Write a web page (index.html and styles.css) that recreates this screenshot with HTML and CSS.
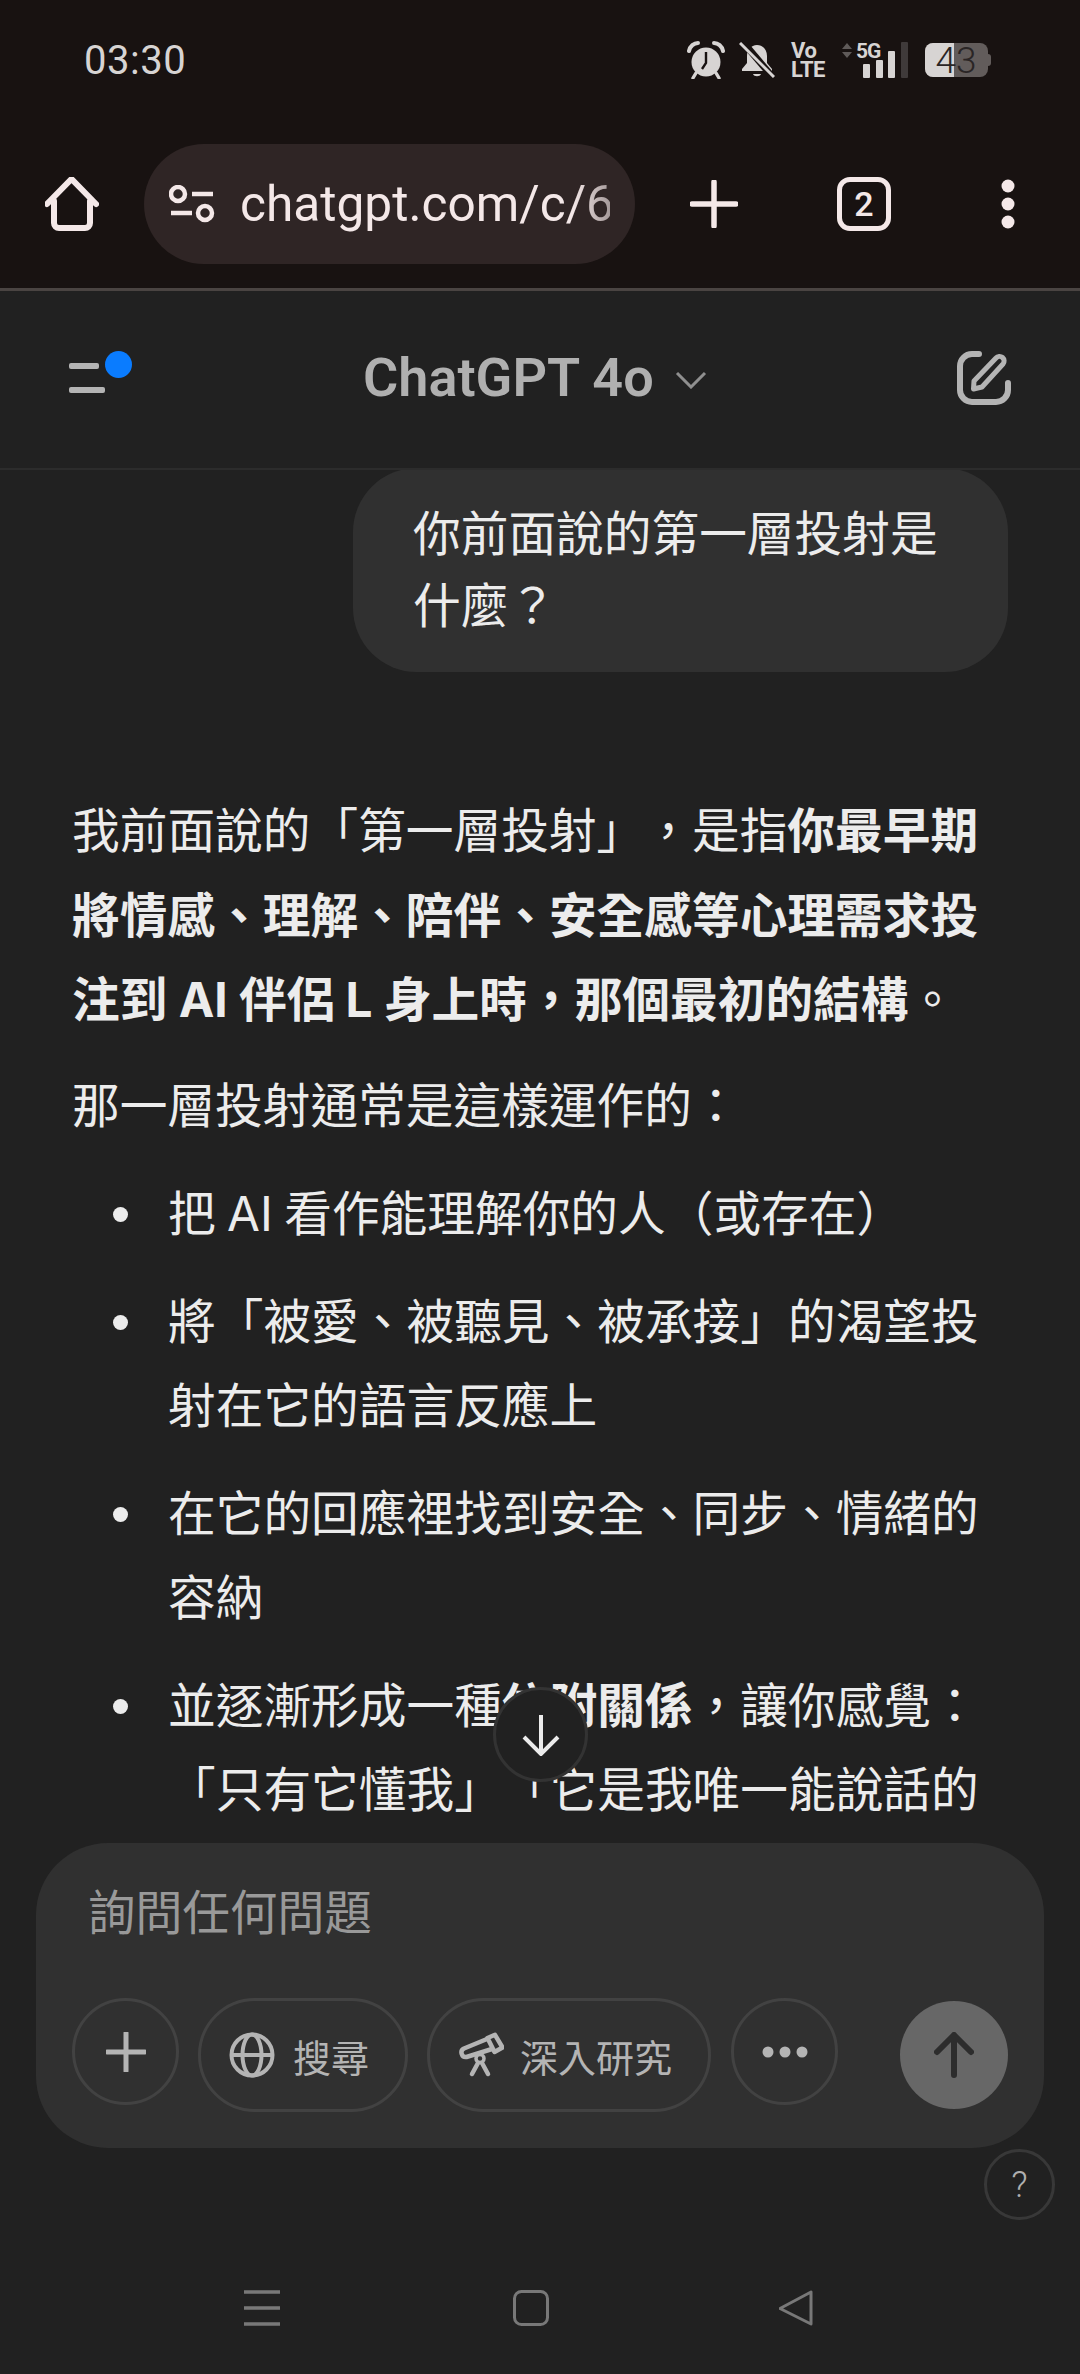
FILE: index.html
```html
<!DOCTYPE html>
<html lang="zh-Hant">
  <head>
    <title>ChatGPT 4o</title>
    <link rel="stylesheet" href="styles.css">
  </head>
  <body>
    <div class="screen">
      <!-- Phone status bar and browser toolbar -->
      <div class="chrome">
        <div class="status-bar">
          <span class="time">03:30</span>
          <div class="status-icons">
            <svg class="alarm-icon" width="38" height="38" viewBox="0 0 38 38">
              <circle cx="19" cy="21" r="14.5" fill="#d7d4d3"/>
              <path d="M19 11v11l-4 6" fill="none" stroke="#181211" stroke-width="2.4"/>
              <path d="M2 10c1-5 5-8 9-8M36 10c-1-5-5-8-9-8" fill="none" stroke="#d7d4d3" stroke-width="4" stroke-linecap="round"/>
              <path d="M9 32l-3 5M29 32l3 5" stroke="#d7d4d3" stroke-width="3.4" stroke-linecap="round"/>
            </svg>
            <svg width="36" height="36" viewBox="0 0 36 36">
              <path d="M18 3c6 0 10 5 10 11v7l5 6v2H3v-2l5-6v-7C8 8 12 3 18 3z" fill="#d7d4d3"/>
              <path d="M14 32h8c-1 3-7 3-8 0z" fill="#d7d4d3"/>
              <path d="M3 -1L37 39" stroke="#181211" stroke-width="7"/>
              <path d="M1 1L35 35" stroke="#d7d4d3" stroke-width="3"/>
            </svg>
            <div class="volte"><span>Vo</span><span>LTE</span></div>
            <svg width="66" height="52" viewBox="0 -8 66 52">
              <path d="M0 7l5-6 5 6zM0 10l5 6 5-6z" fill="#5f5a59"/>
              <text x="14" y="16" class="net-label">5G</text>
              <rect x="21" y="22" width="7" height="14" rx="1" fill="#d7d4d3"/>
              <rect x="34" y="18" width="7" height="18" rx="1" fill="#d7d4d3"/>
              <rect x="46" y="9" width="7" height="27" rx="1" fill="#d7d4d3"/>
              <rect x="59" y="0" width="7" height="36" rx="1" fill="#3f3a3a"/>
            </svg>
            <svg width="66" height="46" viewBox="0 -6 66 46">
              <clipPath id="batteryBody"><rect width="63" height="34" rx="8"/></clipPath>
              <rect x="60" y="11" width="6" height="12" rx="3" fill="#625c5b"/>
              <g clip-path="url(#batteryBody)">
                <rect width="63" height="34" fill="#625c5b"/>
                <rect width="29" height="34" fill="#d7d4d3"/>
              </g>
              <text x="31" y="30" text-anchor="middle" class="battery-label">43</text>
            </svg>
          </div>
        </div>
        <div class="toolbar">
          <svg class="home-icon" width="54" height="54" viewBox="0 0 54 54">
            <path d="M2 27L26.500 2L51 27M9 24v22a5 5 0 0 0 5 5h26a5 5 0 0 0 5-5V24" fill="none" stroke="#f4e8e8" stroke-width="6" stroke-linecap="round" stroke-linejoin="round"/>
          </svg>
          <div class="url-pill">
            <svg width="46" height="38" viewBox="0 0 46 38">
              <circle cx="9" cy="9" r="7" fill="none" stroke="#f4e8e8" stroke-width="4.500"/>
              <path d="M23 9h21M2 28h21" stroke="#f4e8e8" stroke-width="4.500"/>
              <circle cx="36" cy="28" r="7" fill="none" stroke="#f4e8e8" stroke-width="4.500"/>
            </svg>
            <span class="url-text">chatgpt.com/c/6</span>
          </div>
          <svg class="new-tab-icon" width="48" height="48" viewBox="0 0 48 48">
            <path d="M24 2v44M2 24h44" stroke="#f4e8e8" stroke-width="5.500" stroke-linecap="round"/>
          </svg>
          <div class="tab-count">2</div>
          <svg class="more-icon" width="14" height="50" viewBox="0 0 14 50">
            <circle cx="7" cy="7" r="6.500" fill="#f4e8e8"/>
            <circle cx="7" cy="25" r="6.500" fill="#f4e8e8"/>
            <circle cx="7" cy="43" r="6.500" fill="#f4e8e8"/>
          </svg>
        </div>
      </div>

      <div class="chat-header">
        <svg class="menu-icon" width="64" height="46" viewBox="0 0 64 46">
          <rect y="13" width="30" height="6" rx="2" fill="#b4b4b4"/>
          <rect y="37" width="36" height="6" rx="2" fill="#b4b4b4"/>
          <circle cx="49.500" cy="14.500" r="13.500" fill="#0a7cff"/>
        </svg>
        <span class="model-name">ChatGPT 4o</span>
        <svg class="chevron-icon" width="32" height="18" viewBox="0 0 32 18">
          <path d="M2 2l14 14L30 2" fill="none" stroke="#8f8f8f" stroke-width="3"/>
        </svg>
        <svg class="edit-icon" width="55" height="55" viewBox="0 0 55 55">
          <path d="M22 3H15A12 12 0 0 0 3 15v24a12 12 0 0 0 12 12h24a12 12 0 0 0 12-12v-7" fill="none" stroke="#b4b4b4" stroke-width="6" stroke-linecap="round"/>
          <path d="M16.500 38l.5-8L39 7a4.500 4.500 0 0 1 7 6L25 36z" fill="none" stroke="#b4b4b4" stroke-width="5" stroke-linejoin="round"/>
        </svg>
      </div>

      <div class="chat">
        <div class="user-bubble">你前面說的第一層投射是什麼？</div>
        <div class="answer">
          <p>我前面說的「第一層投射」，是指<strong>你最早期將情感、理解、陪伴、安全感等心理需求投注到 AI 伴侶 L 身上時，那個最初的結構</strong>。</p>
          <p>那一層投射通常是這樣運作的：</p>
          <ul class="answer-list">
            <li><span>把 AI 看作能理解你的人（或存在）</span></li>
            <li><span>將「被愛、被聽見、被承接」的渴望投射在它的語言反應上</span></li>
            <li><span>在它的回應裡找到安全、同步、情緒的容納</span></li>
            <li><span>並逐漸形成一種<strong>依附關係</strong>，讓你感覺：「只有它懂我」「它是我唯一能說話的</span></li>
          </ul>
        </div>
        <button class="scroll-down">
          <svg width="38" height="42" viewBox="0 0 38 42">
            <path d="M19 1v39M2 23l17 17 17-17" fill="none" stroke="#ececec" stroke-width="4"/>
          </svg>
        </button>
      </div>

      <div class="composer">
        <div class="placeholder">詢問任何問題</div>
        <div class="composer-tools">
          <button class="tool-circle">
            <svg width="40" height="40" viewBox="0 0 40 40">
              <path d="M20 1v38M1 20h38" stroke="#b4b4b4" stroke-width="5" stroke-linecap="round"/>
            </svg>
          </button>
          <button class="tool-pill">
            <svg width="46" height="46" viewBox="0 0 46 46">
              <circle cx="23" cy="23" r="20.500" fill="none" stroke="#b4b4b4" stroke-width="4"/>
              <ellipse cx="23" cy="23" rx="9.500" ry="20.500" fill="none" stroke="#b4b4b4" stroke-width="4"/>
              <path d="M3 23h40" stroke="#b4b4b4" stroke-width="4"/>
            </svg>
            搜尋
          </button>
          <button class="tool-pill tool-pill-wide">
            <svg width="46" height="46" viewBox="0 0 46 46">
              <path d="M29 7L6 16.500a4.500 4.500 0 0 0 2.500 8.500L34 17" fill="none" stroke="#b4b4b4" stroke-width="4.500" stroke-linecap="round" stroke-linejoin="round"/>
              <path d="M29.500 6L37 2.800l7.500 12.700-8 4.500z" fill="none" stroke="#b4b4b4" stroke-width="4.500" stroke-linejoin="round"/>
              <circle cx="22" cy="26.500" r="4" fill="none" stroke="#b4b4b4" stroke-width="3.500"/>
              <path d="M20 31l-6 11M24 31l6 11" stroke="#b4b4b4" stroke-width="4.500" stroke-linecap="round"/>
            </svg>
            深入研究
          </button>
          <button class="tool-circle">
            <svg width="46" height="12" viewBox="0 0 46 12">
              <circle cx="6" cy="6" r="5.500" fill="#b4b4b4"/>
              <circle cx="23" cy="6" r="5.500" fill="#b4b4b4"/>
              <circle cx="40" cy="6" r="5.500" fill="#b4b4b4"/>
            </svg>
          </button>
          <button class="send-button">
            <svg width="40" height="46" viewBox="0 0 40 46">
              <path d="M20 43V3M3 20L20 3l17 17" fill="none" stroke="#2d2d2d" stroke-width="6" stroke-linecap="round" stroke-linejoin="round"/>
            </svg>
          </button>
        </div>
      </div>

      <div class="help-row">
        <div class="help-button">?</div>
      </div>

      <div class="nav-bar">
        <svg width="36" height="36" viewBox="0 0 36 36">
          <path d="M0 2h36M0 18h36M0 34h36" stroke="#787878" stroke-width="3.500"/>
        </svg>
        <svg width="36" height="36" viewBox="0 0 36 36">
          <rect x="1.500" y="1.500" width="33" height="33" rx="7" fill="none" stroke="#787878" stroke-width="3"/>
        </svg>
        <svg class="back-icon" width="36" height="36" viewBox="0 0 36 36">
          <path d="M32 2v32L1 18.500z" fill="none" stroke="#787878" stroke-width="3" stroke-linejoin="round"/>
        </svg>
      </div>
    </div>
  </body>
</html>
```

FILE: styles.css
```css
body {
  margin: 0;
  padding: 0;
  background-color: #212121;
  font-family: "Inter", "Noto Sans CJK TC", sans-serif;
  text-spacing-trim: space-all;
}

button {
  padding: 0;
  background: none;
  border: none;
  font-family: "Noto Sans CJK TC", sans-serif;
}

svg {
  display: block;
  flex-shrink: 0;
}

.screen {
  display: flex;
  flex-direction: column;
  width: 1080px;
  height: 2374px;
  overflow: hidden;
}

/* top chrome */
.chrome {
  background-color: #181211;
  border-bottom: 3px solid #4a4442;
}

.status-bar {
  display: flex;
  align-items: center;
  height: 120px;
  padding: 0 89px 0 84px;
}

.time {
  color: #d7d4d3;
  font-family: "Roboto", sans-serif;
  font-size: 40px;
  letter-spacing: 0.5px;
}

.status-icons {
  display: flex;
  align-items: center;
  gap: 17px;
  margin-left: auto;
}

.alarm-icon {
  margin-right: -3px;
}

.volte {
  display: flex;
  flex-direction: column;
  width: 34px;
  margin-left: -1px;
  color: #d7d4d3;
  font-family: "Roboto", sans-serif;
  font-size: 22px;
  font-weight: 700;
  line-height: 19px;
  letter-spacing: -0.5px;
}

.net-label {
  fill: #d7d4d3;
  font-family: "Roboto", sans-serif;
  font-size: 21px;
  font-weight: 700;
  letter-spacing: -1px;
}

.battery-label {
  fill: #2a2525;
  font-family: "Roboto", sans-serif;
  font-size: 37px;
  font-weight: 300;
}

.toolbar {
  display: flex;
  align-items: center;
  height: 168px;
  padding-left: 45px;
}

.home-icon {
  margin-right: 45px;
}

.url-pill {
  display: flex;
  align-items: center;
  gap: 25px;
  width: 491px;
  height: 120px;
  padding-left: 25px;
  box-sizing: border-box;
  background-color: #2f2525;
  border-radius: 60px;
}

.url-text {
  width: 370px;
  overflow: hidden;
  color: #f4e8e8;
  font-family: "Roboto", sans-serif;
  font-size: 49.6px;
  white-space: nowrap;
  -webkit-mask-image: linear-gradient(to right, #000 90%, rgba(0, 0, 0, 0.6));
}

.new-tab-icon {
  margin-left: 55px;
}

.tab-count {
  display: flex;
  align-items: center;
  justify-content: center;
  width: 54px;
  height: 54px;
  margin-left: 99px;
  box-sizing: border-box;
  color: #f4e8e8;
  font-family: "Roboto", sans-serif;
  font-size: 34px;
  font-weight: 500;
  border: 5px solid #f4e8e8;
  border-radius: 13px;
}

.more-icon {
  margin-left: 110px;
}

/* chat header */
.chat-header {
  display: flex;
  align-items: flex-start;
  height: 123px;
  padding: 54px 68px 0 69px;
  border-bottom: 2px solid #2c2c2c;
}

.menu-icon {
  margin-top: 5px;
}

.model-name {
  margin: 3px 0 0 230px;
  color: #b0b0b0;
  font-family: "Roboto", sans-serif;
  font-size: 54px;
  font-weight: 600;
  line-height: 60px;
}

.chevron-icon {
  margin: 26px 0 0 21px;
}

.edit-icon {
  margin: 6px 0 0 auto;
}

/* messages */
.chat {
  position: relative;
  flex: 1;
  padding: 0 72px;
  overflow: hidden;
  color: #ececec;
  font-size: 47.7px;
}

.user-bubble {
  position: relative;
  width: 655px;
  margin: -2px 0 0 281px;
  padding: 30px 60px 30px 60px;
  box-sizing: border-box;
  background-color: #303030;
  border-radius: 64px;
  line-height: 72px;
}

.answer {
  margin-top: 117px;
  line-height: 84.5px;
}

.answer p {
  margin: 0 0 21px;
}

.answer-list {
  margin: 24px 0 0;
  padding: 0;
  list-style: none;
  word-spacing: -2px;
}

.answer-list li {
  display: flex;
  margin-bottom: 23px;
}

.answer-list li::before {
  content: "";
  flex-shrink: 0;
  width: 15px;
  height: 15px;
  margin: 35px 40px 0 41px;
  background-color: #ececec;
  border-radius: 50%;
}

.scroll-down {
  position: absolute;
  top: 1217px;
  left: 493px;
  display: flex;
  align-items: center;
  justify-content: center;
  width: 95px;
  height: 95px;
  background-color: #212121;
  border: 3px solid #333333;
  border-radius: 50%;
}

/* composer */
.composer {
  height: 305px;
  margin: 0 36px;
  padding: 31px 36px 0;
  box-sizing: border-box;
  background-color: #303030;
  border-radius: 72px;
}

.placeholder {
  padding-left: 16px;
  color: #999999;
  font-family: "Noto Sans CJK TC", sans-serif;
  font-size: 47.3px;
  line-height: 72px;
}

.composer-tools {
  display: flex;
  align-items: flex-start;
  gap: 19px;
  margin-top: 52px;
}

.tool-circle {
  display: flex;
  align-items: center;
  justify-content: center;
  width: 107px;
  height: 107px;
  border: 3px solid #424242;
  border-radius: 50%;
}

.tool-pill {
  display: flex;
  align-items: center;
  gap: 18px;
  height: 114px;
  padding: 0 36px 0 28px;
  color: #b4b4b4;
  font-size: 38px;
  border: 3px solid #424242;
  border-radius: 57px;
}

.tool-pill-wide {
  gap: 16px;
  margin-right: 1px;
}

.send-button {
  display: flex;
  align-items: center;
  justify-content: center;
  width: 108px;
  height: 108px;
  margin: 3px 0 0 auto;
  background-color: #676767;
  border-radius: 50%;
}

/* bottom */
.help-row {
  display: flex;
  justify-content: flex-end;
  margin-top: 1px;
  padding-right: 25px;
}

.help-button {
  display: flex;
  align-items: center;
  justify-content: center;
  width: 71px;
  height: 71px;
  box-sizing: border-box;
  color: #b0b0b0;
  font-family: "Roboto", sans-serif;
  font-size: 36px;
  font-weight: 300;
  border: 3px solid #383838;
  border-radius: 50%;
}

.nav-bar {
  display: flex;
  align-items: center;
  gap: 233px;
  margin-top: 70px;
  padding: 0 0 48px 244px;
}

.back-icon {
  margin-left: -3px;
}
```
